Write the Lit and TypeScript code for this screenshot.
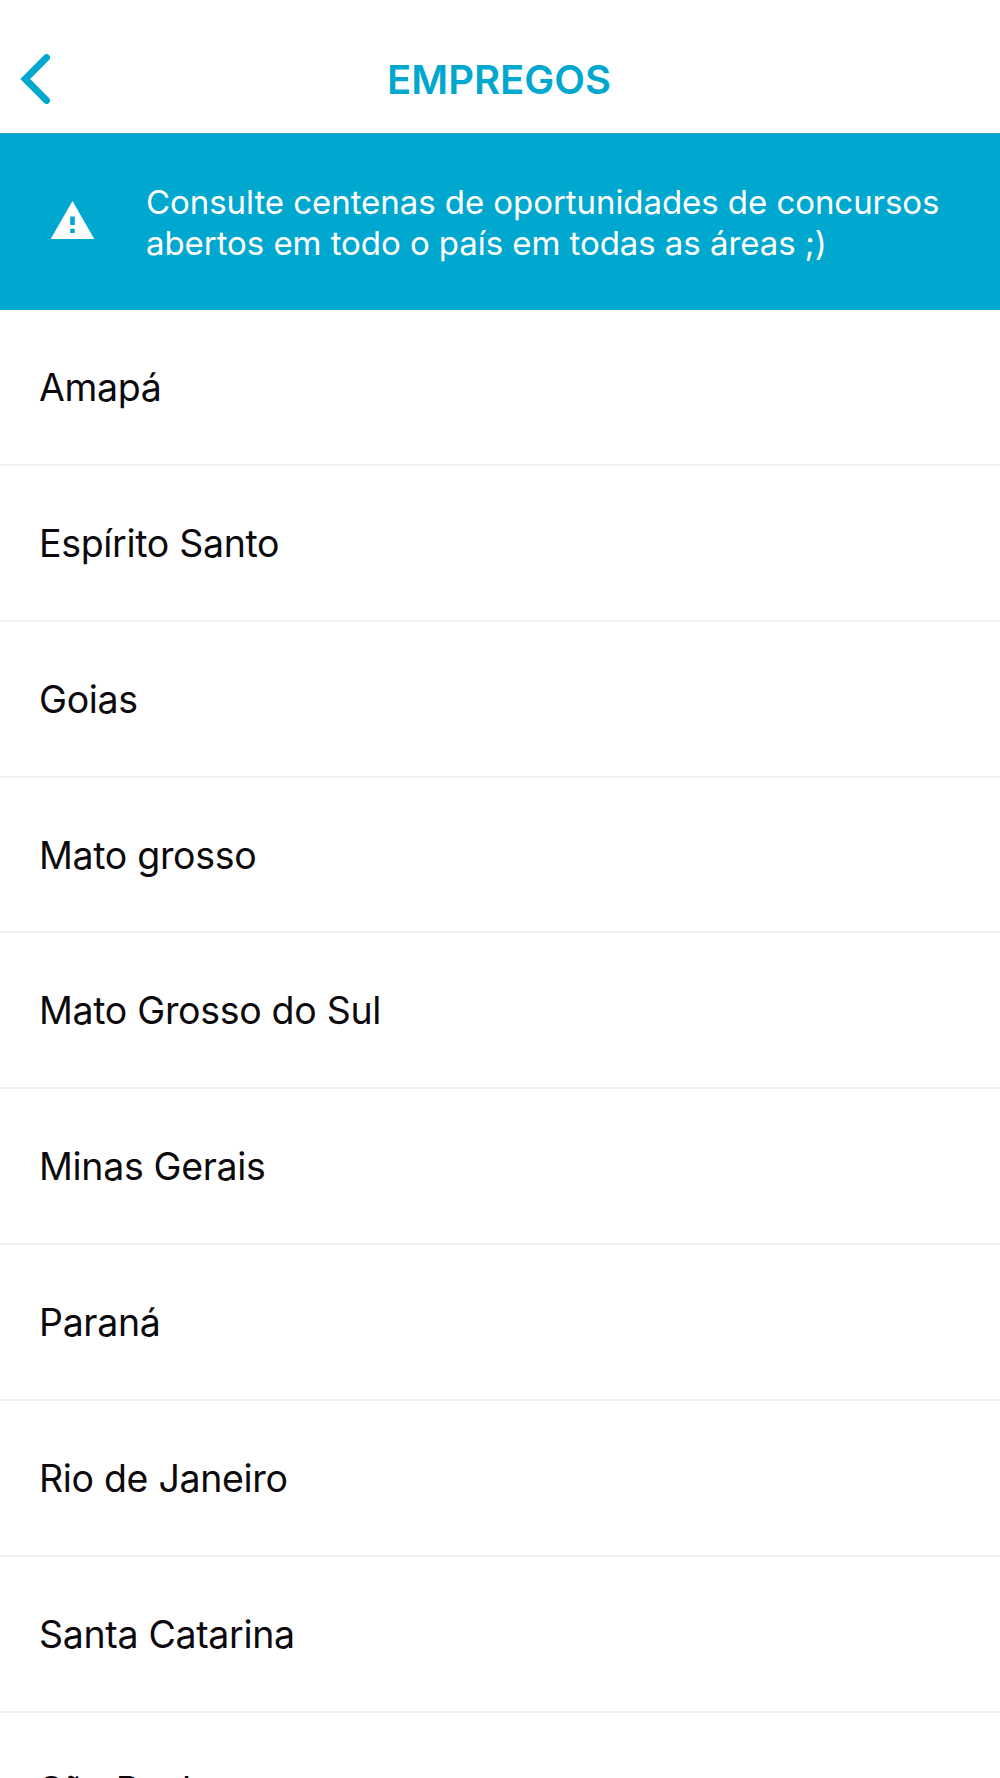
import { LitElement, html, css } from "lit";
import { customElement } from "lit/decorators.js";

const STATES = ["Amapá", "Espírito Santo", "Goias", "Mato grosso", "Mato Grosso do Sul", "Minas Gerais", "Paraná", "Rio de Janeiro", "Santa Catarina", "São Paulo"];

@customElement("app-root")
export class AppRoot extends LitElement {
  static styles = css`
    :host { display: flex; flex-direction: column; height: 1778px; overflow: hidden; background: #fff; color: #0c0a0d; font-family: Inter, "Liberation Sans", sans-serif; }
    * { box-sizing: border-box; }
    .header { flex: none; display: grid; grid-template-columns: 100px 1fr 100px; align-items: center; height: 133px; padding-top: 27px; color: #00a8cf; }
    .back { width: 34px; height: 54px; margin-left: 18px; }
    .title { margin: 0; padding-right: 2px; text-align: center; font-size: 40px; font-weight: 600; line-height: 50px; }
    .notice { flex: none; display: flex; align-items: center; height: 177px; padding-left: 50px; gap: 52px; background: #00a8cf; color: #fff; border-top: 1px solid #1f9fbf; }
    .warning { width: 45px; height: 38px; flex: none; margin-bottom: 4px; }
    .message { margin: 0 0 0 -1px; padding-top: 2px; font-size: 33px; font-weight: 400; line-height: 41.2px; letter-spacing: -0.06px; white-space: nowrap; }
    .list { flex: none; margin: 0; padding: 0; list-style: none; }
    .row { display: flex; align-items: center; height: 155.85px; padding: 1.3px 0 0 39px; border-bottom: 2px solid #eeeff0; font-size: 37.5px; font-weight: 400; letter-spacing: -0.32px; }
  `;
  render() {
    return html`
      <header class="header">
        <svg class="back" viewBox="0 0 34 54" fill="none" stroke="currentColor" stroke-width="7" stroke-linecap="round"><path d="M28.5 4.6 7.2 26 28.5 47.4"/></svg>
        <h1 class="title">EMPREGOS</h1>
      </header>
      <section class="notice">
        <svg class="warning" viewBox="0 0 45 38" fill="currentColor"><path fill-rule="evenodd" d="M22.5 0 44.3 38H.7ZM20.2 15.5v8.5h4.6v-8.5Zm0 12.3v4.3h4.6v-4.3Z"/></svg>
        <p class="message">Consulte centenas de oportunidades de concursos<br>abertos em todo o país em todas as áreas ;)</p>
      </section>
      <ul class="list">${STATES.map((s) => html`<li class="row">${s}</li>`)}</ul>`;
  }
}
